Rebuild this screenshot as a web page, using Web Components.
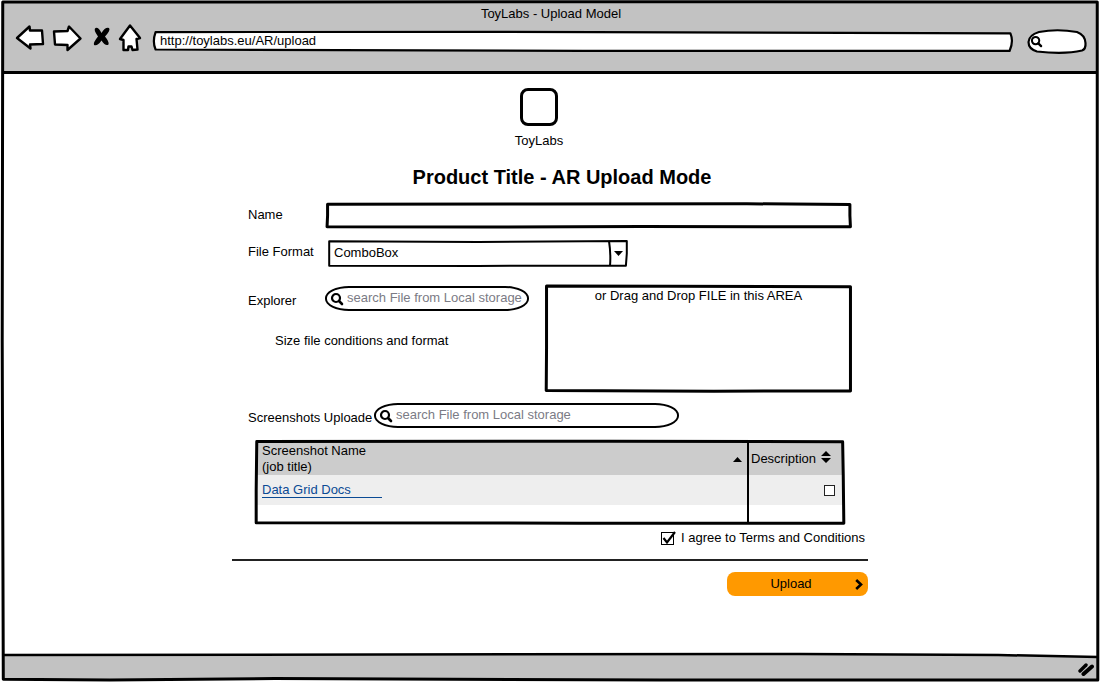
<!DOCTYPE html>
<html lang="en">
<head>
<meta charset="utf-8">
<meta name="viewport" content="width=device-width, initial-scale=1">
<title>ToyLabs - Upload Model</title>
<style>
  html, body { margin: 0; }
  body { font: 13px/16px "Liberation Sans", Arial, sans-serif; color: #000; background: #fff; }
</style>
</head>
<body>
<toy-browser heading="ToyLabs - Upload Model" address="http://toylabs.eu/AR/upload">
  <upload-page></upload-page>
</toy-browser>

<script>
const base = `
  * { box-sizing: border-box; }
  input, select, button { font: inherit; color: inherit; margin: 0; padding: 0; border: 0; background: none; outline: 0; min-width: 0; appearance: none; border-radius: 0; }
`;
function define(name, html, setup) {
  const template = document.createElement('template');
  template.innerHTML = html;
  customElements.define(name, class extends HTMLElement {
    constructor() {
      super();
      this.attachShadow({ mode: 'open' }).append(template.content.cloneNode(true));
    }
    connectedCallback() { if (setup) setup(this, this.shadowRoot); }
  });
}

/* Hand-drawn rectangle around whatever is slotted in */
define('sketch-box', `
  <style>
    :host { display: block; position: relative; }
    svg { position: absolute; inset: 0; width: 100%; height: 100%; overflow: visible; pointer-events: none; }
    path { fill: none; stroke: #000; stroke-width: var(--stroke, 3px); stroke-linejoin: round; stroke-linecap: round; vector-effect: non-scaling-stroke; }
  </style>
  <slot></slot>
  <svg viewBox="0 0 100 100" preserveAspectRatio="none" aria-hidden="true"><path/></svg>
`, (host, root) => {
  const shapes = {
    wide: 'M.3 5 L40 4 L80 3 L99.6 6 L99.6 50 L99.7 95 L60 94 L30 96 L.2 95 L.3 50Z',
    combo: 'M.4 5 L50 7 L99.6 4 L99.6 50 L99.3 95 L50 96 L.4 95Z',
    area: 'M.5 1 L40 1.2 L99.5 1.6 L99.5 40 L99.5 99 L55 99.2 L.4 98.6 L.5 60Z',
    grid: 'M.3 1.8 L60 1.4 L99.6 2 L99.7 40 L99.8 99 L55 99 L.2 98.6 L.2 60Z',
    frame: 'M.25 .3 L50 .25 L99.75 .3 L99.75 40 L99.8 70 L99.8 99.7 L60 99.7 L25 99.5 L10 99.7 L.3 99.6 L.2 50Z'
  };
  root.querySelector('path').setAttribute('d', shapes[host.getAttribute('shape') || 'area']);
});

define('magnifier-icon', `
  <style>
    :host { display: block; flex: none; width: 12px; height: 12px; }
    svg { display: block; width: 100%; height: 100%; overflow: visible; }
  </style>
  <svg viewBox="0 0 12 12" fill="none" stroke="#000" stroke-width="2.2" stroke-linecap="round" aria-hidden="true">
    <circle cx="5" cy="5" r="4"/><path d="M8 8 L11 11" stroke-width="2.6"/>
  </svg>
`);

/* Browser window: title, toolbar, page area, status bar */
define('toy-browser', `
  <style>${base}
    :host { display: block; }
    sketch-box { display: flex; flex-direction: column; min-height: 100vh; padding: 2px; --stroke: 3px; }
    header { background: #c2c2c2; border-bottom: 3px solid #000; padding: 4px 11px 18px 13px; }
    h1 { margin: 0; font: inherit; text-align: center; }
    nav { display: flex; align-items: center; height: 31px; }
    nav button { display: block; height: 28px; }
    nav svg { display: block; height: 28px; overflow: visible; fill: #fff; stroke: #000; stroke-width: 2.4; stroke-linejoin: round; stroke-linecap: round; }
    .forward { margin-left: 8px; }
    .stop { margin-left: 12px; }
    .home { margin-left: 9px; }
    .address { position: relative; flex: 1; height: 21px; margin: 8px 14px 0 12px; }
    .address svg, .find svg { position: absolute; inset: 0; width: 100%; height: 100%; }
    .address path, .find path { vector-effect: non-scaling-stroke; }
    .address input { position: relative; display: block; width: 100%; height: 19px; padding-left: 7px; }
    .find { position: relative; display: flex; align-items: center; width: 60px; height: 25px; margin-top: 8px; padding-left: 4px; }
    nav magnifier-icon { position: relative; width: 11px; height: 11px; }
    .find input { position: relative; flex: 1; }
    main { flex: 1; padding: 14px 2px; }
    footer { position: relative; height: 26px; display: flex; justify-content: flex-end; align-items: center; padding: 3px 4px 0 0; }
    footer .bar { position: absolute; inset: 0; width: 100%; height: 100%; overflow: visible; }
    footer .grip { position: relative; display: block; }
  </style>
  <sketch-box shape="frame">
    <header>
      <h1></h1>
      <nav>
        <button type="button" aria-label="Back"><svg width="29" viewBox="0 0 29 28"><path d="M2 14 L14.500 2.500 L15 6.500 L27 6.500 L28 20 L15 20.500 L15.500 24.500 Z"/></svg></button>
        <button type="button" class="forward" aria-label="Forward"><svg width="29" viewBox="0 0 29 28"><path d="M28.500 14.500 L17 2.500 L15.500 7 L2 7.500 L3 20.500 L15.500 21 L15.500 26 Z"/></svg></button>
        <button type="button" class="stop" aria-label="Stop"><svg width="17" viewBox="0 0 17 28" style="stroke:none;fill:#000"><path d="M2.500 4 Q5.500 3 8.500 9 Q12 3 16 4 Q18 6 12 12.500 Q16.500 18 15.500 20.500 Q12.500 22.500 8.500 16.500 Q4.500 22.500 1 21 Q0 18.500 5 12.500 Q0 5.500 2.500 4Z"/></svg></button>
        <button type="button" class="home" aria-label="Home"><svg width="22" viewBox="0 0 22 28"><path d="M11 1.500 L21 14 L17.500 15 L18.500 25.500 L13.500 26 L12.500 22.500 L9.500 22.500 L9 26 L4.500 26 L4.500 16 L1 15 Z"/></svg></button>
        <div class="address">
          <svg viewBox="0 0 100 100" preserveAspectRatio="none" aria-hidden="true"><path d="M.3 5 L40 4 L99.700 11 Q100.100 50 99.600 95 L50 95 L.3 88 Q-.1 50 .3 5Z" fill="#fff" stroke="#000" stroke-width="2.200"/></svg>
          <input type="text" aria-label="Address">
        </div>
        <div class="find">
          <svg viewBox="0 0 60 25" preserveAspectRatio="none" aria-hidden="true"><path d="M12 3 Q30 -.5 50 3 Q58 6 58.500 14 Q59 20 55 21.500 Q38 25.500 10 22.500 Q1.500 20 1.500 13 Q2 6 12 3Z" fill="#fff" stroke="#000" stroke-width="2.200"/></svg>
          <magnifier-icon></magnifier-icon>
          <input type="text" aria-label="Find">
        </div>
      </nav>
    </header>
    <main><slot></slot></main>
    <footer>
      <svg class="bar" viewBox="0 0 1100 26" preserveAspectRatio="none" aria-hidden="true"><path d="M0 1 L800 0 L1000 1 L1100 3 V26 H0Z" fill="#c2c2c2"/><path d="M0 1 L800 0 L1000 1 L1100 3" fill="none" stroke="#000" stroke-width="2.500"/></svg>
      <svg class="grip" width="16" height="14" viewBox="0 0 16 14" stroke="#000" stroke-linecap="round" aria-hidden="true"><path d="M2 9 L8 3" stroke-width="3.400"/><path d="M5.500 12 L14 4.500" stroke-width="4"/></svg>
    </footer>
  </sketch-box>
`, (host, root) => {
  root.querySelector('h1').textContent = host.getAttribute('heading');
  root.querySelector('.address input').value = host.getAttribute('address');
});

define('text-row', `
  <style>${base}
    :host { display: flex; }
    label { flex: none; width: 78px; padding-top: 4px; }
    sketch-box { flex: 1; height: 25px; }
    input { display: block; width: 100%; height: 100%; padding: 0 8px; }
  </style>
  <label for="field"></label>
  <sketch-box shape="wide"><input id="field" type="text"></sketch-box>
`, (host, root) => { root.querySelector('label').textContent = host.getAttribute('label'); });

define('combo-row', `
  <style>${base}
    :host { display: flex; }
    label { flex: none; width: 80px; padding-top: 4px; }
    sketch-box { flex: 0 1 300px; height: 27px; --stroke: 2px; }
    select { display: block; width: 100%; height: 100%; padding: 0 24px 2px 6px; }
    .arrow { position: absolute; top: 0; right: 0; width: 20px; height: 27px; pointer-events: none; }
  </style>
  <label for="field"></label>
  <sketch-box shape="combo">
    <select id="field"><option>ComboBox</option></select>
    <svg class="arrow" viewBox="0 0 20 27" aria-hidden="true"><path d="M1 1 Q3 14 2 26" fill="none" stroke="#000" stroke-width="2"/><path d="M6 11 H15 L10.500 16Z"/></svg>
  </sketch-box>
`, (host, root) => { root.querySelector('label').textContent = host.getAttribute('label'); });

define('search-row', `
  <style>${base}
    :host { display: flex; }
    label { flex: none; width: var(--label-width, 77px); padding-top: 7px; white-space: nowrap; }
    .pill { flex: 1; min-width: 0; display: flex; align-items: center; gap: 4px; height: 25px; padding-left: 4px; border: 2px solid #000; border-radius: 24px / 12px; background: #fff; }
    input { flex: 1; height: 20px; padding-bottom: 2px; }
    input::placeholder { color: #7b7b85; opacity: 1; }
  </style>
  <label for="field"></label>
  <div class="pill"><magnifier-icon></magnifier-icon><input id="field" type="text" placeholder="search File from Local storage"></div>
`, (host, root) => { root.querySelector('label').textContent = host.getAttribute('label'); });

define('screenshot-grid', `
  <style>${base}
    :host { display: block; }
    sketch-box { padding: 2px; }
    table { width: 100%; border-collapse: collapse; table-layout: fixed; }
    th, td { padding: 0 5px; text-align: left; font-weight: 400; }
    th:first-child, td:first-child { border-right: 2px solid #000; }
    th { height: 32px; background: #ccc; }
    .second { width: 95px; }
    th.second { padding: 0 2px; white-space: nowrap; }
    td { height: 30px; }
    .filled td { background: #eee; }
    .blank td { height: 17px; }
    .head { display: flex; justify-content: space-between; align-items: center; padding-top: 1px; }
    .head svg { display: block; flex: none; }
    .second .head { justify-content: flex-start; gap: 5px; }
    .second svg { margin-bottom: 4px; }
    a { display: block; width: 120px; color: #0a4a94; text-decoration: none; border-bottom: 1px solid #0a4a94; line-height: 15px; }
    td.second { text-align: right; padding-right: 8px; }
    input { display: inline-block; vertical-align: middle; width: 11px; height: 11px; border: 1px solid #222; background: #fff; }
  </style>
  <sketch-box shape="grid">
    <table>
      <thead><tr>
        <th scope="col"><div class="head"><span>Screenshot Name<br>(job title)</span><svg width="9" height="5" viewBox="0 0 9 5" aria-hidden="true"><path d="M4.500 0 L9 5 H0Z"/></svg></div></th>
        <th scope="col" class="second"><div class="head"><span>Description</span><svg width="10" height="12" viewBox="0 0 10 12" aria-hidden="true"><path d="M5 0 L10 5 H0Z M0 7 H10 L5 12Z"/></svg></div></th>
      </tr></thead>
      <tbody>
        <tr class="filled"><td><a href="#docs">Data Grid Docs</a></td><td class="second"><input type="checkbox" aria-label="Description of Data Grid Docs"></td></tr>
        <tr class="blank"><td></td><td class="second"></td></tr>
      </tbody>
    </table>
  </sketch-box>
`);

define('agree-box', `
  <style>${base}
    :host { display: flex; justify-content: flex-end; padding-right: 3px; }
    label { display: flex; align-items: center; gap: 5px; }
    .tick { position: relative; width: 15px; height: 14px; }
    input { display: block; width: 13px; height: 13px; margin-top: 1px; border: 1px solid #000; }
    svg { position: absolute; inset: 0; display: none; pointer-events: none; overflow: visible; }
    input:checked + svg { display: block; }
  </style>
  <label><span class="tick"><input type="checkbox" checked><svg width="15" height="14" viewBox="0 0 15 14" fill="none" stroke="#000" stroke-width="2.200" aria-hidden="true"><path d="M2.500 7 L6 11.500 L14 1"/></svg></span><slot></slot></label>
`);

define('upload-button', `
  <style>${base}
    :host { display: block; width: 141px; }
    button { display: flex; align-items: center; width: 100%; height: 24px; padding-right: 5px; border-radius: 8px; background: #ff9900; }
    span { flex: 1; text-align: center; }
    svg { display: block; }
  </style>
  <button type="submit"><span><slot></slot></span><svg width="8" height="11" viewBox="0 0 8 11" fill="none" stroke="#000" stroke-width="2.600" aria-hidden="true"><path d="M1.200 1 L6 5.500 L1.200 10"/></svg></button>
`);

define('upload-page', `
  <style>${base}
    :host { display: block; max-width: 636px; margin: 0 auto; }
    .logo { display: flex; flex-direction: column; align-items: center; gap: 7px; padding-right: 22px; }
    .logo svg { display: block; }
    h2 { margin: 16px 0 14px 24px; font-size: 20px; line-height: 24px; font-weight: 700; text-align: center; }
    .fields { padding: 0 16px; }
    combo-row { margin: 12px 0 18px; }
    .source { display: grid; grid-template-columns: 281px 1fr; gap: 16px; }
    .source search-row { padding-top: 1px; }
    .source p { margin: 22px 0 0 27px; }
    .drop { height: 107px; padding-top: 3px; text-align: center; }
    .shots { --label-width: 126px; max-width: 431px; margin-top: 11px; }
    screenshot-grid { margin: 12px 23px 6px; }
    hr { margin: 13px 0 11px; border: 0; border-top: 2px solid #222; }
    upload-button { margin-left: auto; }
  </style>
  <div class="logo">
    <svg width="38" height="38" viewBox="0 0 38 38" aria-hidden="true"><rect x="1.500" y="1.500" width="35" height="35" rx="6.500" fill="#fff" stroke="#000" stroke-width="3"/></svg>
    <span>ToyLabs</span>
  </div>
  <h2>Product Title - AR Upload Mode</h2>
  <form>
    <div class="fields">
      <text-row label="Name"></text-row>
      <combo-row label="File Format"></combo-row>
      <div class="source">
        <div><search-row label="Explorer"></search-row><p>Size file conditions and format</p></div>
        <sketch-box class="drop">or Drag and Drop FILE in this AREA</sketch-box>
      </div>
      <search-row class="shots" label="Screenshots Uploade"></search-row>
    </div>
    <screenshot-grid></screenshot-grid>
    <agree-box>I agree to Terms and Conditions</agree-box>
    <hr>
    <upload-button>Upload</upload-button>
  </form>
`);
</script>
</body>
</html>
